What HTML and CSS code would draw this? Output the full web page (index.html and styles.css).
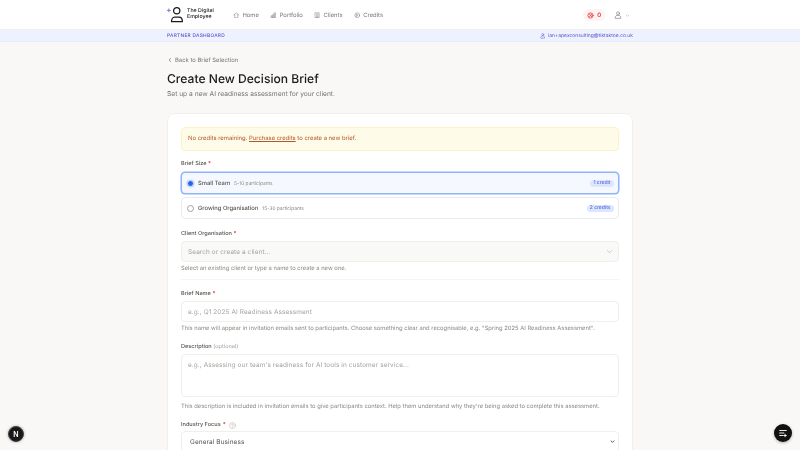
FILE: index.html
```html
<!DOCTYPE html>
<html lang="en">
<head>
<meta charset="utf-8">
<title>Create New Decision Brief</title>
<link rel="stylesheet" href="styles.css">
</head>
<body>
<header class="topbar">
  <div class="wrap topbar-inner">
    <div class="brand">
      <svg class="logo" viewBox="0 0 24 22" fill="none" stroke="#1a1a1a" stroke-width="1.7"><circle cx="13" cy="6" r="4.200"/><path d="M6 20.500c0-3.600 2-6 4-6h6c2.600 0 4.500 2.400 4.500 6z"/><path d="M2.500 3.500v4M.5 5.500h4" stroke="#4f5bd5" stroke-width="1"/></svg>
      <span class="brand-name">The Digital<br>Employee</span>
    </div>
    <nav class="nav">
      <a class="nav-item"><svg class="ico" viewBox="0 0 24 24"><path d="M3 11l9-8 9 8M6 9v12h12V9"/></svg>Home</a>
      <a class="nav-item"><svg class="ico" viewBox="0 0 24 24"><path d="M4 21v-7h4v7zM10 21V9h4v12zM16 21V3h4v18z"/></svg>Portfolio</a>
      <a class="nav-item"><svg class="ico" viewBox="0 0 24 24"><path d="M5 3h14v18H5zM9 8h6M9 12h6M9 21v-4h6v4"/></svg>Clients</a>
      <a class="nav-item"><svg class="ico" viewBox="0 0 24 24"><circle cx="12" cy="12" r="9"/><path d="M10 8l5 4-5 4z"/></svg>Credits</a>
    </nav>
    <div class="top-right">
      <span class="credit-pill"><svg class="ico-red" viewBox="0 0 24 24"><circle cx="12" cy="12" r="9"/><path d="M9 8l7 8M16 8l-7 8"/></svg>0</span>
      <svg class="ico user" viewBox="0 0 24 24"><circle cx="12" cy="7" r="4.500"/><path d="M4 21v-3c0-3 3-5 8-5s8 2 8 5v3z"/></svg>
      <svg class="chev-small" viewBox="0 0 24 24"><path d="M5 9l7 7 7-7"/></svg>
    </div>
  </div>
</header>
<div class="partnerbar">
  <div class="wrap partner-inner">
    <span class="partner-label">PARTNER DASHBOARD</span>
    <span class="partner-user"><svg class="ico-indigo" viewBox="0 0 24 24"><circle cx="12" cy="7" r="4.500"/><path d="M4 21v-3c0-3 3-5 8-5s8 2 8 5v3z"/></svg>ian+apexconsulting@tiktaktoe.co.uk</span>
  </div>
</div>
<main class="wrap main">
  <a class="back"><svg class="chev-back" viewBox="0 0 24 24"><path d="M15 5l-7 7 7 7"/></svg>Back to Brief Selection</a>
  <h1 class="title">Create New Decision Brief</h1>
  <p class="subtitle">Set up a new AI readiness assessment for your client.</p>
  <section class="card">
    <div class="alert">No credits remaining. <u>Purchase credits</u> to create a new brief.</div>
    <div class="label brief-label">Brief Size <span class="req">*</span></div>
    <div class="options">
      <div class="option option-on">
        <span class="radio radio-on"></span><span class="opt-name">Small Team</span><span class="opt-sub">5-10 participants</span><span class="badge">1 credit</span>
      </div>
      <div class="option">
        <span class="radio"></span><span class="opt-name">Growing Organisation</span><span class="opt-sub">15-30 participants</span><span class="badge">2 credits</span>
      </div>
    </div>
    <div class="label client-label">Client Organisation <span class="req">*</span></div>
    <div class="input input-grey">Search or create a client...<svg class="chev" viewBox="0 0 24 24"><path d="M5 9l7 7 7-7"/></svg></div>
    <p class="help">Select an existing client or type a name to create a new one.</p>
    <hr class="rule">
    <div class="label">Brief Name <span class="req">*</span></div>
    <div class="input">e.g., Q1 2025 AI Readiness Assessment</div>
    <p class="help">This name will appear in invitation emails sent to participants. Choose something clear and recognisable, e.g. "Spring 2025 AI Readiness Assessment".</p>
    <div class="label desc-label">Description <span class="opt">(optional)</span></div>
    <div class="input textarea">e.g., Assessing our team's readiness for AI tools in customer service...</div>
    <p class="help help-desc">This description is included in invitation emails to give participants context. Help them understand why they're being asked to complete this assessment.</p>
    <div class="label industry-label">Industry Focus <span class="req">*</span><svg class="ico-help" viewBox="0 0 24 24"><circle cx="12" cy="12" r="10"/><path d="M9 9.500a3 3 0 1 1 4.500 2.600c-1 .6-1.500 1.200-1.500 2.400M12 17.500v.5"/></svg></div>
    <div class="input select">General Business<svg class="chev-dark" viewBox="0 0 24 24"><path d="M5 9l7 7 7-7"/></svg></div>
  </section>
</main>
<button class="fab-left" aria-label="Next.js tools">N</button>
<button class="fab-right" aria-label="Menu"><svg viewBox="0 0 24 24"><path d="M4 6h16M4 12h10M4 18h8M17 15v6M14 18h6"/></svg></button>
</body>
</html>
```
FILE: styles.css
```css
* { box-sizing: border-box; }
html, body { margin: 0; height: 450px; overflow: hidden; }
html { background: #f9f8f6; }
body { font-family: Inter, "Liberation Sans", sans-serif; color: #1c1917; text-rendering: geometricPrecision; filter: blur(.3px); }
svg { display: block; fill: none; stroke-linecap: round; stroke-linejoin: round; }
.wrap { width: 466px; margin: 0 auto; }

.topbar { height: 30px; background: #fff; border-bottom: 1px solid #f0efec; }
.topbar-inner { height: 30px; display: flex; align-items: center; }
.brand { display: flex; align-items: center; gap: 2px; width: 66px; }
.logo { width: 18px; height: 17px; margin-top: -1px; }
.brand-name { font-size: 5.250px; line-height: 5.800px; font-weight: 500; color: #1c1917; }
.nav { display: flex; gap: 11.300px; }
.nav-item { display: flex; align-items: center; gap: 3px; font-size: 5.850px; color: #78746f; }
.ico { width: 6.500px; height: 6.500px; stroke: #78746f; stroke-width: 1.800; }
.top-right { margin-left: auto; display: flex; align-items: center; margin-right: 3px; }
.credit-pill { display: flex; align-items: center; gap: 3px; height: 12px; padding: 0 4px; border-radius: 6px; background: #fef2f2; color: #dc2626; font-size: 6px; font-weight: 500; margin-right: 9px; }
.ico-red { width: 7px; height: 7px; stroke: #dc2626; stroke-width: 2.500; }
.user { width: 8px; height: 8px; }
.chev-small { width: 5px; height: 5px; margin-left: 3px; stroke: #8a8782; stroke-width: 2; }

.partnerbar { height: 12px; background: #eef2ff; border-bottom: 1px solid #e6eafb; }
.partner-inner { height: 12px; display: flex; align-items: center; justify-content: space-between; }
.partner-label { font-size: 4.850px; font-weight: 500; letter-spacing: .25px; color: #5a52cc; }
.partner-user { display: flex; align-items: center; gap: 3px; font-size: 4.960px; color: #5a52cc; }
.ico-indigo { width: 5.500px; height: 5.500px; stroke: #5a52cc; stroke-width: 2; }

.main { padding-top: 14px; }
.back { display: flex; align-items: center; gap: 1px; height: 8px; font-size: 5.900px; color: #78746f; }
.chev-back { width: 6px; height: 6px; stroke: #57534e; stroke-width: 2.200; margin-right: 1px; }
.title { margin: 6px 0 0; font-size: 12.100px; line-height: 18px; font-weight: 500; color: #1c1917; }
.subtitle { margin: 1px 0 0; font-size: 6.650px; line-height: 10px; color: #78746f; }

.card { margin-top: 14px; background: #fff; border: 1px solid #f0efec; border-radius: 8px; padding: 13px; height: 420px; }
.alert { height: 24px; background: #fefce8; border: 1px solid #fdf3c4; border-radius: 4px; padding: 0 6px; line-height: 22px; font-size: 5.900px; color: #b4562a; }
.label { font-size: 5.600px; line-height: 8px; font-weight: 500; color: #57534e; }
.req { color: #dc2626; }
.opt { color: #a8a29e; font-weight: 400; }
.brief-label { margin-top: 9px; }
.options { margin-top: 4px; display: flex; flex-direction: column; gap: 3px; }
.option { height: 22px; border: 1px solid #e9ebf3; border-radius: 4px; display: flex; align-items: center; padding: 0 4.500px; background: #fff; }
.option-on { background: #f5f9ff; border-color: #8fb4f8; box-shadow: 0 0 0 .5px #8fb4f8; }
.radio { width: 7px; height: 7px; border-radius: 50%; border: 1px solid #a8a29e; background: #fff; margin-right: 4.500px; flex: none; }
.radio-on { border: 1.500px solid #dbe7fe; background: #2563eb; box-shadow: 0 0 0 .5px #bfd4fb; }
.opt-name { font-size: 5.830px; font-weight: 500; color: #57534e; margin-right: 4px; }
.opt-sub { margin-top: 1px; font-size: 4.850px; color: #8a8782; }
.badge { margin-left: auto; margin-top: 1px; height: 7.500px; line-height: 7.500px; padding: 0 3px; border-radius: 4px; background: #dbe7fe; color: #5f6ad8; font-size: 5px; font-weight: 500; }
.client-label { margin-top: 11px; }

.input { margin-top: 3px; height: 21px; border: 1px solid #f0efec; border-radius: 4px; background: #fff; display: flex; align-items: center; padding: 0 6px; font-size: 6.450px; letter-spacing: .1px; color: #a8a29e; }
.input-grey { background: #f9f9f8; justify-content: space-between; }
.chev { width: 7px; height: 7px; stroke: #a8a29e; stroke-width: 2; margin-right: -1px; }
.help { margin: 3px 0 0; font-size: 5.820px; line-height: 8px; color: #8a8782; }
.rule { border: 0; border-top: 1px solid #f5f4f2; margin: 6px 0 10px; }
.desc-label { margin-top: 10px; }
.textarea { height: 43px; align-items: flex-start; padding-top: 6px; }
.help-desc { margin-top: 6px; }
.industry-label { margin-top: 10px; display: flex; align-items: center; gap: 2px; }
.ico-help { width: 7px; height: 7px; margin-left: 1px; stroke: #a8a29e; stroke-width: 1.500; }
.select { margin-top: 2px; height: 21px; padding: 0 8px; color: #57534e; justify-content: space-between; }
.chev-dark { width: 5px; height: 5px; stroke: #1c1917; stroke-width: 3.500; margin-right: -5px; }

.fab-left { position: fixed; left: 8px; bottom: 8px; width: 16px; height: 16px; padding: 0; border: 1px solid #444; border-radius: 50%; background: #18181b; color: #fff; font: 600 7px Inter, sans-serif; box-shadow: 0 0 3px rgba(0,0,0,.3); }
.fab-right { position: fixed; right: 8px; bottom: 8px; width: 18px; height: 18px; padding: 4px; border: 0; border-radius: 50%; background: #111; box-shadow: 0 1px 3px rgba(0,0,0,.3); }
.fab-right svg { width: 10px; height: 10px; stroke: #fff; stroke-width: 2.200; }
```
